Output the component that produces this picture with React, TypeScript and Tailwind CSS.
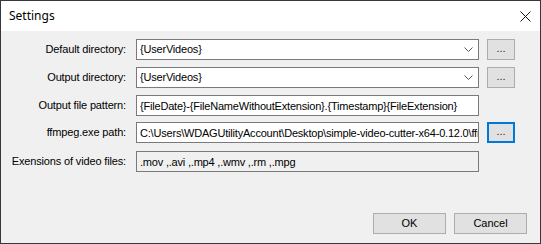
import React from 'react';

const labelFont = { fontFamily: '"Liberation Sans", Arial, sans-serif' };

const Chevron = () => (
    <svg width="9" height="5" viewBox="0 0 9 5" className="shrink-0">
        <polyline points="0.5,0.5 4.5,4.5 8.5,0.5" fill="none" stroke="#555" strokeWidth="1" />
    </svg>
);

const DotsButton = ({ focused = false }: { focused?: boolean }) => (
    <button
        className={`ml-[8px] w-[28px] h-[21px] flex items-center justify-center text-[11px] leading-none bg-[#e1e1e1] ${
            focused ? 'border-2 border-[#0078d7]' : 'border border-[#adadad]'
        }`}
    >
        <span className="-mt-[2px] text-[#3a1a3a]">...</span>
    </button>
);

interface RowProps {
    label: string;
    children: React.ReactNode;
    className?: string;
}

const Row: React.FC<RowProps> = ({ label, children, className = '' }) => (
    <div className={`flex items-center ${className}`}>
        <div className="w-[126px] pr-[1px] text-right text-[11px] tracking-[-0.15px] text-black whitespace-nowrap">{label}</div>
        <div className="ml-[9px] flex items-center">{children}</div>
    </div>
);

const ComboBox = ({ value }: { value: string }) => (
    <div className="w-[343px] h-[21px] bg-white border border-[#7a7a7a] flex items-center pl-[3px] pr-[5px] text-[11px] tracking-[-0.2px]">
        <span className="flex-1 truncate">{value}</span>
        <Chevron />
    </div>
);

const TextBox = ({ value, readOnly = false }: { value: string; readOnly?: boolean }) => (
    <input
        readOnly
        value={value}
        className={`w-[343px] h-[21px] border border-[#7a7a7a] pl-[3px] text-[11px] tracking-[-0.2px] text-black outline-none ${
            readOnly ? 'bg-[#f0f0f0]' : 'bg-white'
        }`}
    />
);

export default function App() {
    return (
        <div className="w-[541px] h-[244px] border border-[#383838] bg-[#f0f0f0] flex flex-col" style={labelFont}>
            <div className="h-[30px] bg-white flex items-center justify-between pl-[8px] pr-[9px]">
                <span className="text-[12px] text-black" style={{ fontFamily: '"Segoe UI", "Noto Sans", sans-serif' }}>
                    Settings
                </span>
                <svg width="11" height="11" viewBox="0 0 11 11">
                    <path d="M0.5 0.5 L10.5 10.5 M10.5 0.5 L0.5 10.5" stroke="#111" strokeWidth="1" />
                </svg>
            </div>

            <div className="flex-1 flex flex-col pt-[8px]">
                <Row label="Default directory:">
                    <ComboBox value="{UserVideos}" />
                    <DotsButton />
                </Row>
                <Row label="Output directory:" className="mt-[7px]">
                    <ComboBox value="{UserVideos}" />
                    <DotsButton />
                </Row>
                <Row label="Output file pattern:" className="mt-[7px]">
                    <TextBox value="{FileDate}-{FileNameWithoutExtension}.{Timestamp}{FileExtension}" />
                </Row>
                <Row label="ffmpeg.exe path:" className="mt-[6px]">
                    <TextBox value="C:\Users\WDAGUtilityAccount\Desktop\simple-video-cutter-x64-0.12.0\ffmpeg.exe" />
                    <DotsButton focused />
                </Row>
                <Row label="Exensions of video files:" className="mt-[8px]">
                    <TextBox value=".mov ,.avi ,.mp4 ,.wmv ,.rm ,.mpg" readOnly />
                </Row>

                <div className="mt-auto mb-[9px] flex justify-end gap-[8px] pr-[13px]">
                    <button className="w-[73px] h-[21px] bg-[#e1e1e1] border border-[#adadad] text-[11px] text-black">OK</button>
                    <button className="w-[73px] h-[21px] bg-[#e1e1e1] border border-[#adadad] text-[11px] text-black">Cancel</button>
                </div>
            </div>
        </div>
    );
}
